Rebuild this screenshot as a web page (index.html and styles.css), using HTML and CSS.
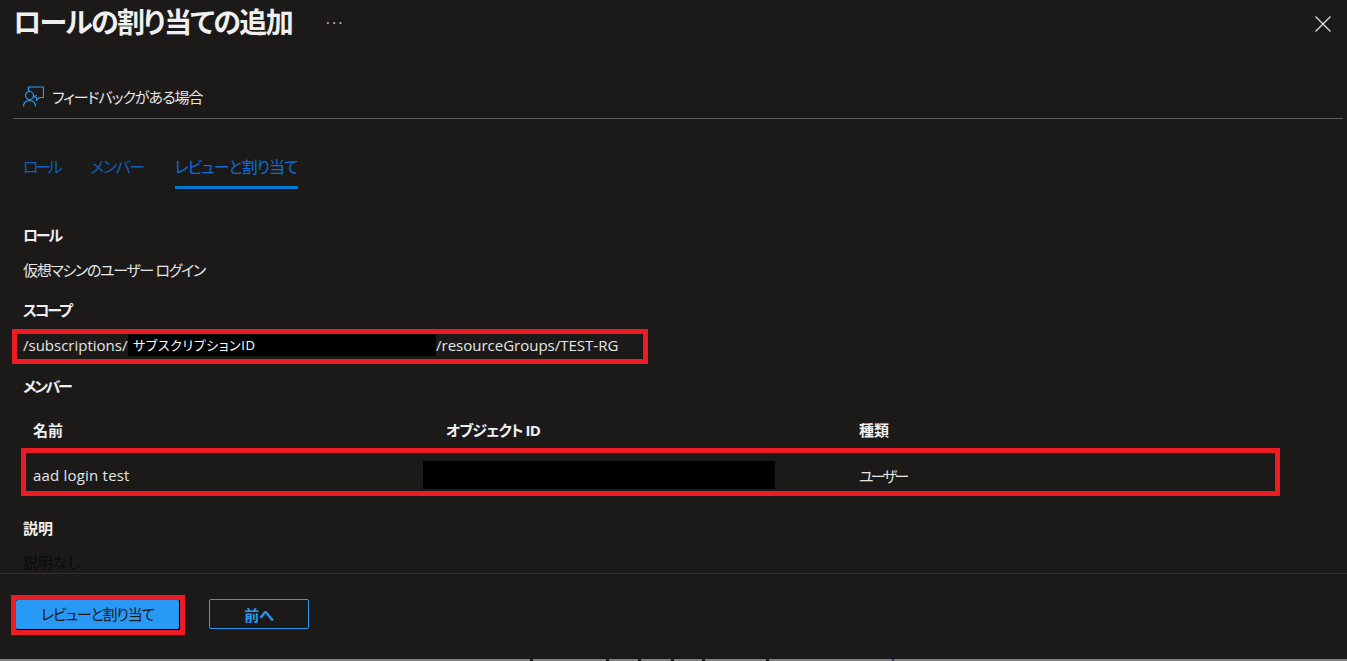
FILE: index.html
```html
<!DOCTYPE html>
<html lang="ja">
<head>
<meta charset="UTF-8">
<title>ロールの割り当ての追加</title>
<link rel="stylesheet" href="styles.css">
</head>

<body>

<div class="blade">

  <header class="head">
    <h1>ロールの割り当ての追加</h1>
    <span class="more">&middot;&middot;&middot;</span>
    <svg class="close" width="16" height="16" viewBox="0 0 16 16">
      <path d="M0.5 0.5L15.5 15.5M15.5 0.5L0.5 15.5" stroke="#e6e6e6" stroke-width="1.2" fill="none"/>
    </svg>
  </header>

  <div class="command">
    <svg class="feedback" width="21" height="21" viewBox="0 0 21 21" fill="none" stroke="#2899f5" stroke-width="1.2">
      <path d="M5.5 5V1H20.5V11.5H16.5L13.5 14V11.5H12"/>
      <path d="M11 11L13.5 9"/>
      <circle cx="6.5" cy="9.5" r="4"/>
      <path d="M0.6 20.5C0.6 16.5 3 14.6 6.5 14.6C10 14.6 12.4 16.5 12.4 20.5"/>
    </svg>
    <span class="feedback-text">フィードバックがある場合</span>
  </div>

  <nav class="tabs">
    <a class="tab tab-role">ロール</a>
    <a class="tab tab-member">メンバー</a>
    <a class="tab active">レビューと割り当て</a>
  </nav>

  <main class="content">
    <h2 class="label label-role">ロール</h2>
    <p class="value value-role">仮想マシンのユーザー ログイン</p>

    <h2 class="label label-scope">スコープ</h2>
    <div class="scope mark">
      <span class="scope-start">/subscriptions/</span><span class="redact">サブスクリプションID</span><span class="scope-end">/resourceGroups/TEST-RG</span>
    </div>

    <h2 class="label label-member">メンバー</h2>
    <div class="row row-head">
      <div class="col-name">名前</div>
      <div class="col-id">オブジェクト ID</div>
      <div class="col-type">種類</div>
    </div>
    <div class="row row-body mark">
      <div class="col-name">aad login test</div>
      <div class="col-id"><span class="redact-id"></span></div>
      <div class="col-type">ユーザー</div>
    </div>

    <h2 class="label label-desc">説明</h2>
    <p class="value value-desc">説明なし</p>
  </main>

  <footer class="foot">
    <div class="primary-mark"><button class="btn btn-primary">レビューと割り当て</button></div>
    <button class="btn btn-back">前へ</button>
  </footer>

</div>

<div class="edge"></div>

</body>
</html>
```

FILE: styles.css
```css
html, body {
  height: 100%;
}
body {
  margin: 0;
  overflow: hidden;
  background-color: #1b1a19;
  color: #e6e6e6;
  font-family: "Open Sans", "Noto Sans CJK JP", sans-serif;
  font-size: 15px;
  font-feature-settings: "palt" 1;
}
.blade {
  height: 659px;
  display: flex;
  flex-direction: column;
}
.head {
  height: 48px;
  display: flex;
  align-items: center;
  padding: 0 16px 0 13px;
}
h1 {
  margin: 0 0 4px;
  font-size: 28px;
  font-weight: 700;
  line-height: 40px;
  letter-spacing: -1.6px;
  color: #f0f0f0;
}
.more {
  margin: 0 0 4px 34px;
  font-size: 14px;
  letter-spacing: 2.5px;
  color: #d0d0d0;
}
.close {
  margin-left: auto;
}
.command {
  height: 71px;
  margin: 0 4px 0 13px;
  padding: 26px 0 0 10px;
  box-sizing: border-box;
  border-bottom: 1px solid #605e5c;
  display: flex;
  align-items: center;
  gap: 8px;
}
.feedback-text {
  letter-spacing: -1px;
}
.tabs {
  display: flex;
  gap: 31px;
  padding: 0 23px;
  margin-top: 35px;
  height: 35px;
}
.tab {
  color: #0f5fbf;
  font-size: 16px;
  line-height: 26px;
}
.tab-role {
  letter-spacing: -3.3px;
}
.tab-member {
  letter-spacing: -1.5px;
}
.tab.active {
  color: #0f6cd6;
  letter-spacing: -1px;
  border-bottom: 3px solid #0078d4;
  height: 32px;
}
.content {
  flex: 1;
  overflow: hidden;
  padding: 0 23px;
}
.label {
  margin: 0;
  font-size: 15px;
  font-weight: 700;
  line-height: 20px;
  letter-spacing: -2.2px;
  color: #f0f0f0;
}
.label-role {
  margin-top: 36px;
}
.value {
  margin: 0;
  line-height: 20px;
}
.value-role {
  margin-top: 15px;
  letter-spacing: -1.35px;
}
.label-scope {
  margin-top: 20px;
}
.mark {
  border: 5px solid #ed1c24;
  box-sizing: border-box;
}
.scope {
  margin: 9px 0 0 -11px;
  width: 636px;
  height: 35px;
  padding-left: 6px;
  display: flex;
  align-items: flex-start;
  line-height: 22px;
}
.scope-start {
  width: 105px;
  white-space: nowrap;
}
.redact {
  width: 308px;
  height: 22px;
  background-color: #000;
  color: #fff;
  font-size: 13px;
  line-height: 22px;
  letter-spacing: 0.6px;
  padding-left: 5px;
  box-sizing: border-box;
}
.label-member {
  margin-top: 12px;
}
.row {
  display: flex;
  align-items: center;
}
.row-head {
  margin-top: 23px;
  height: 20px;
  font-weight: 700;
  color: #f0f0f0;
  padding-left: 10px;
}
.row-head .col-id {
  letter-spacing: -0.9px;
}
.row-body {
  margin: 9px 0 0 -2px;
  width: 1259px;
  height: 48px;
  padding: 6px 0 0 7px;
}
.row-body .col-name {
  letter-spacing: 0.2px;
}
.row-body .col-type {
  letter-spacing: -2.7px;
}
.col-name {
  width: 413px;
}
.col-id {
  width: 413px;
}
.col-type {
  flex: 1;
}
.redact-id {
  display: block;
  width: 352px;
  height: 28px;
  margin-left: -23px;
  background-color: #000;
}
.label-desc {
  margin-top: 22px;
  letter-spacing: 0;
}
.value-desc {
  margin-top: 14px;
  color: #0a0a0a;
}
.foot {
  height: 86px;
  flex: none;
  box-sizing: border-box;
  border-top: 1px solid #323130;
  display: flex;
  align-items: flex-start;
  padding: 21px 0 0 11px;
}
.primary-mark {
  border: 5px solid #ed1c24;
  display: flex;
}
.btn {
  font-family: inherit;
  font-feature-settings: inherit;
  font-size: 15px;
  border-radius: 2px;
  height: 30px;
  padding: 0;
}
.btn-primary {
  width: 164px;
  background-color: #2899f5;
  border: none;
  border-right: 1px solid #000;
  border-bottom: 1px solid #000;
  color: #1b1a19;
  letter-spacing: -1.2px;
  padding-bottom: 3px;
}
.btn-back {
  width: 100px;
  margin: 4px 0 0 24px;
  background-color: transparent;
  border: 1px solid #2899f5;
  color: #2899f5;
  font-weight: 700;
}
/* strip of the window behind the blade, broken by the dark ticks */
.edge {
  height: 2px;
  background-color: #7f7f7f;
  background-image: linear-gradient(90deg,
    transparent 530px, #1b1a19 530px, #1b1a19 533px,
    transparent 533px, transparent 606px, #1b1a19 606px, #1b1a19 609px,
    transparent 609px, transparent 638px, #1b1a19 638px, #1b1a19 641px,
    transparent 641px, transparent 671px, #1b1a19 671px, #1b1a19 674px,
    transparent 674px, transparent 702px, #1b1a19 702px, #1b1a19 705px,
    transparent 705px, transparent 766px, #1b1a19 766px, #1b1a19 769px,
    transparent 769px, transparent 892px, #1f3f7f 892px, #1f3f7f 894px,
    transparent 894px);
}
```
